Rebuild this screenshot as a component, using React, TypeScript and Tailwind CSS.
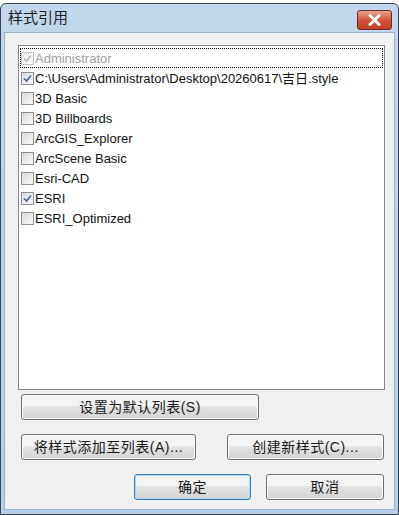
import React from 'react';

const items = [
  { label: 'Administrator', checked: true, disabled: true, focus: true },
  { label: 'C:\\Users\\Administrator\\Desktop\\20260617\\吉日.style', checked: true },
  { label: '3D Basic' },
  { label: '3D Billboards' },
  { label: 'ArcGIS_Explorer' },
  { label: 'ArcScene Basic' },
  { label: 'Esri-CAD' },
  { label: 'ESRI', checked: true },
  { label: 'ESRI_Optimized' },
];

const Check = ({ checked, disabled }: { checked?: boolean; disabled?: boolean }) => (
  <div
    className={
      'w-[13px] h-[13px] shrink-0 border flex items-center justify-center bg-gradient-to-br ' +
      (disabled ? 'border-[#c6c6c6] from-[#ececec] to-[#f8f8f8]' : 'border-[#8f8f8f] from-[#dcdcdc] to-[#f8f8f8]')
    }
  >
    {checked && (
      <svg width="9" height="9" viewBox="0 0 9 9">
        <path
          d="M1 4.5 L3.5 7 L8 1.5"
          fill="none"
          stroke={disabled ? '#b8b8b8' : '#4a5fa8'}
          strokeWidth="1.6"
        />
      </svg>
    )}
  </div>
);

const Btn = ({ children, w, primary }: { children: React.ReactNode; w: string; primary?: boolean }) => (
  <div
    className={
      'h-[26px] rounded-[3px] border flex items-center justify-center text-[14px] tracking-[0.5px] text-[#1a1a1a] bg-gradient-to-b from-[#f3f3f3] from-45% via-[#e2e2e2] to-[#d3d3d3] ' +
      w +
      (primary ? ' border-[#3c7fb1] shadow-[inset_0_0_0_1px_#a8d8f2]' : ' border-[#707070] shadow-[inset_0_0_0_1px_#fbfbfb]')
    }
  >
    {children}
  </div>
);

export default function App() {
  return (
    <div
      className="w-[399px] h-[515px] bg-white pt-[3px] overflow-hidden"
      style={{ fontFamily: '"Liberation Sans", "Noto Sans CJK SC", sans-serif' }}
    >
      <div className="h-[512px] flex flex-col rounded-t-[6px] border border-[#3a4452] bg-gradient-to-b from-[#c2d6ec] to-[#b6cfe9]">
        {/* Title bar */}
        <div className="h-[28px] shrink-0 flex items-center justify-between pl-[7px] pr-[6px]">
          <span className="text-[15px] text-[#1e1e1e] mt-[1px]">样式引用</span>
          <div className="w-[35px] h-[20px] mt-[3px] rounded-[3px] border border-[#6b2a22] bg-gradient-to-b from-[#e8a492] via-[#d0553b] to-[#c13e26] flex items-center justify-center">
            <svg width="13" height="12" viewBox="0 0 13 12">
              <path d="M2 1.5 L11 10.5 M11 1.5 L2 10.5" stroke="#ffffff" strokeWidth="3" strokeLinecap="round" />
            </svg>
          </div>
        </div>
        {/* Client area */}
        <div className="flex-1 mx-[3px] mb-[4px] bg-[#f0f0f0] border border-[#9fb3c8] pt-[12px] pl-[13px] pr-[9px] flex flex-col">
          <div className="h-[345px] border border-[#828790] bg-white pt-[2px] pl-[1px] pr-[1px]">
            {items.map((it) => (
              <div
                key={it.label}
                className={
                  'h-[20px] flex items-center gap-[1px] ' +
                  (it.focus ? 'border border-dotted border-[#000]' : 'border border-transparent')
                }
              >
                <Check checked={it.checked} disabled={it.disabled} />
                <span className={'text-[13px] leading-none ' + (it.disabled ? 'text-[#a0a0a0]' : 'text-[#111]')}>
                  {it.label}
                </span>
              </div>
            ))}
          </div>
          <div className="mt-[4px] pl-[3px]">
            <Btn w="w-[238px]">设置为默认列表(S)</Btn>
          </div>
          <div className="mt-[14px] pl-[3px] flex justify-between pr-[1px]">
            <Btn w="w-[175px]">将样式添加至列表(A)...</Btn>
            <Btn w="w-[157px]">创建新样式(C)...</Btn>
          </div>
          <div className="mt-[14px] flex justify-end gap-[15px] pr-[1px]">
            <Btn w="w-[117px]" primary>
              确定
            </Btn>
            <Btn w="w-[118px]">取消</Btn>
          </div>
        </div>
      </div>
    </div>
  );
}
